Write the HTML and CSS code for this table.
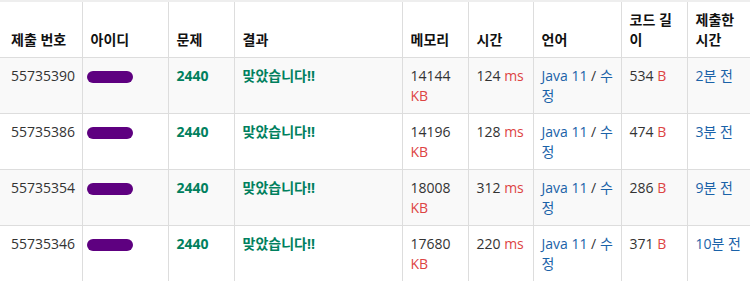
FILE: index.html
```html
<!DOCTYPE html>
<html lang="ko">
<head>
<meta charset="utf-8">
<link rel="stylesheet" href="styles.css">
</head>
<body>
<table class="status">
  <colgroup>
    <col class="c1"><col class="c2"><col class="c3"><col class="c4"><col class="c5"><col class="c6"><col class="c7"><col class="c8"><col class="c9">
  </colgroup>
  <thead>
    <tr>
      <th>제출 번호</th><th>아이디</th><th>문제</th><th>결과</th><th>메모리</th><th>시간</th><th>언어</th><th>코드 길이</th><th>제출한 시간</th>
    </tr>
  </thead>
  <tbody>
    <tr class="odd">
      <td>55735390</td><td><span class="mask"></span></td><td><a class="prob">2440</a></td><td><span class="ac">맞았습니다!!</span></td>
      <td>14144 <span class="unit">KB</span></td><td>124 <span class="unit">ms</span></td><td class="lang"><a class="link">Java 11</a> / <a class="link">수정</a></td><td>534 <span class="unit">B</span></td><td><a class="link">2분 전</a></td>
    </tr>
    <tr>
      <td>55735386</td><td><span class="mask"></span></td><td><a class="prob">2440</a></td><td><span class="ac">맞았습니다!!</span></td>
      <td>14196 <span class="unit">KB</span></td><td>128 <span class="unit">ms</span></td><td class="lang"><a class="link">Java 11</a> / <a class="link">수정</a></td><td>474 <span class="unit">B</span></td><td><a class="link">3분 전</a></td>
    </tr>
    <tr class="odd">
      <td>55735354</td><td><span class="mask"></span></td><td><a class="prob">2440</a></td><td><span class="ac">맞았습니다!!</span></td>
      <td>18008 <span class="unit">KB</span></td><td>312 <span class="unit">ms</span></td><td class="lang"><a class="link">Java 11</a> / <a class="link">수정</a></td><td>286 <span class="unit">B</span></td><td><a class="link">9분 전</a></td>
    </tr>
    <tr>
      <td>55735346</td><td><span class="mask"></span></td><td><a class="prob">2440</a></td><td><span class="ac">맞았습니다!!</span></td>
      <td>17680 <span class="unit">KB</span></td><td>220 <span class="unit">ms</span></td><td class="lang"><a class="link">Java 11</a> / <a class="link">수정</a></td><td>371 <span class="unit">B</span></td><td><a class="link">10분 전</a></td>
    </tr>
  </tbody>
</table>
</body>
</html>
```

FILE: styles.css
```css
html, body {
  margin: 0;
  padding: 0;
  background: #fff;
}
body {
  font-family: "Open Sans", "Noto Sans CJK KR", sans-serif;
  font-size: 14px;
  color: #333;
}
.status {
  border-collapse: collapse;
  table-layout: fixed;
  width: 750px;
  border-top: 2px solid #eee;
}
.c1 { width: 82px; }
.c2 { width: 86px; }
.c3 { width: 66px; }
.c4 { width: 168px; }
.c5 { width: 66px; }
.c6 { width: 65px; }
.c7 { width: 88px; }
.c8 { width: 66px; }
.c9 { width: 63px; }
th, td {
  padding: 8px;
  line-height: 19.5px;
  border-left: 1px solid #ddd;
  text-align: left;
}
th:first-child, td:first-child {
  border-left: none;
  padding-left: 11px;
}
th {
  font-weight: bold;
  color: #111;
  vertical-align: bottom;
  border-bottom: 1px solid #ddd;
}
td {
  vertical-align: top;
  border-top: 1px solid #ddd;
  height: 39px;
}
td.lang {
  padding-right: 4px;
}
tr.odd td {
  background: #f9f9f9;
}
.mask {
  display: inline-block;
  width: 46px;
  height: 12px;
  border-radius: 6px;
  background: #5e0080;
  margin-left: -4px;
  vertical-align: -2px;
}
.prob {
  color: #00805e;
  font-weight: bold;
}
.ac {
  color: #00805e;
  font-weight: bold;
}
.unit {
  color: #dd4444;
}
.link {
  color: #1a62a8;
}
```
